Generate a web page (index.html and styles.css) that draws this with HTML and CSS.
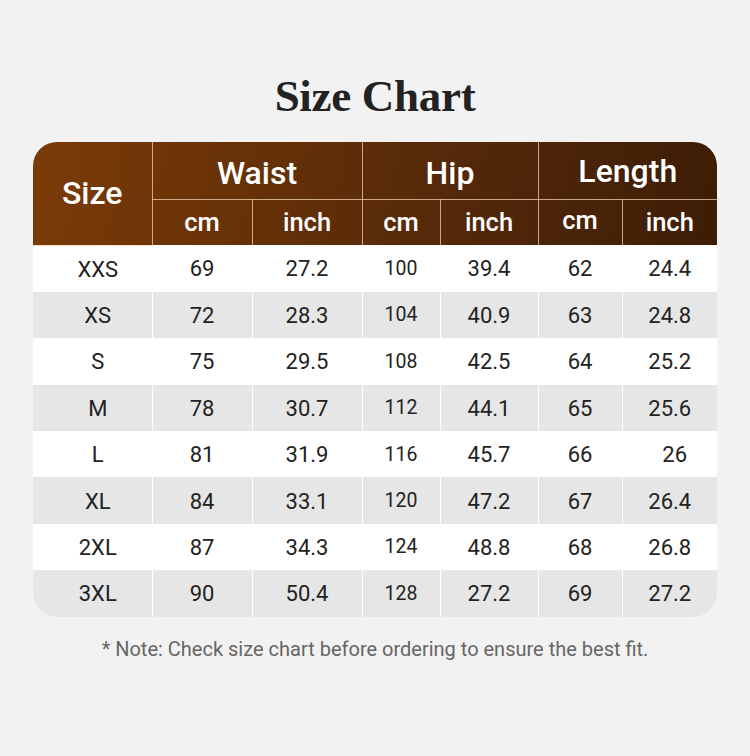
FILE: index.html
```html
<!DOCTYPE html>
<html>
<head>
<meta charset="utf-8">
<link rel="stylesheet" href="styles.css">
</head>
<body>
<div class="page">
  <h1 class="title">Size Chart</h1>
  <div class="card">
    <table class="chart">
      <colgroup>
        <col class="c-size"><col class="c-wcm"><col class="c-win"><col class="c-hcm"><col class="c-hin"><col class="c-lcm"><col class="c-lin">
      </colgroup>
      <thead>
        <tr class="h1row">
          <th rowspan="2" class="size-h">Size</th>
          <th colspan="2">Waist</th>
          <th colspan="2">Hip</th>
          <th colspan="2" class="len-h">Length</th>
        </tr>
        <tr class="h2row">
          <th>cm</th><th>inch</th><th>cm</th><th>inch</th><th class="up">cm</th><th>inch</th>
        </tr>
      </thead>
      <tbody>
        <tr><td>XXS</td><td>69</td><td>27.2</td><td class="sm">100</td><td>39.4</td><td>62</td><td>24.4</td></tr>
        <tr><td>XS</td><td>72</td><td>28.3</td><td class="sm">104</td><td>40.9</td><td>63</td><td>24.8</td></tr>
        <tr><td>S</td><td>75</td><td>29.5</td><td class="sm">108</td><td>42.5</td><td>64</td><td>25.2</td></tr>
        <tr><td>M</td><td>78</td><td>30.7</td><td class="sm">112</td><td>44.1</td><td>65</td><td>25.6</td></tr>
        <tr><td>L</td><td>81</td><td>31.9</td><td class="sm">116</td><td>45.7</td><td>66</td><td class="right">26</td></tr>
        <tr><td>XL</td><td>84</td><td>33.1</td><td class="sm">120</td><td>47.2</td><td>67</td><td>26.4</td></tr>
        <tr><td>2XL</td><td>87</td><td>34.3</td><td class="sm">124</td><td>48.8</td><td>68</td><td>26.8</td></tr>
        <tr><td>3XL</td><td>90</td><td>50.4</td><td class="sm">128</td><td>27.2</td><td>69</td><td>27.2</td></tr>
      </tbody>
    </table>
  </div>
  <p class="note">* Note: Check size chart before ordering to ensure the best fit.</p>
</div>
</body>
</html>
```
FILE: styles.css
```css
html, body {
  margin: 0;
  padding: 0;
  background: #f2f2f2;
}
.page {
  width: 750px;
  height: 756px;
  padding-top: 69px;
  box-sizing: border-box;
}
.title {
  margin: 0;
  text-align: center;
  font-family: "Liberation Serif", "DejaVu Serif", serif;
  font-weight: 700;
  font-size: 45px;
  line-height: 54px;
  color: #222;
  letter-spacing: -0.3px;
}
.card {
  width: 684px;
  margin: 19px auto 0;
  border-radius: 24px;
  overflow: hidden;
  background: #fff;
}
.chart {
  width: 684px;
  border-collapse: collapse;
  table-layout: fixed;
  font-family: Roboto, "Liberation Sans", sans-serif;
}
.c-size { width: 119px; }
.c-wcm { width: 100px; }
.c-win { width: 110px; }
.c-hcm { width: 78px; }
.c-hin { width: 98px; }
.c-lcm { width: 84px; }
.c-lin { width: 95px; }
.chart thead {
  background: linear-gradient(100deg, #7b3b08 0%, #683207 30%, #55290a 60%, #3c1d05 100%);
  color: #fff;
}
.chart th {
  font-weight: 500;
  padding: 0;
  line-height: 1;
  border: 1px solid rgba(240, 210, 180, 0.75);
}
.chart thead tr:first-child th { border-top: none; }
.chart th:first-child { border-left: none; }
.chart th:last-child { border-right: none; }
.chart thead tr:last-child th { border-bottom: none; }
.h1row th {
  height: 52px;
  font-size: 32px;
  padding-top: 5px;
}
.h1row .len-h { padding-top: 0; height: 57px; }
.h1row .size-h {
  padding-top: 0;
  font-size: 32px;
}
.h2row th {
  height: 45px;
  font-size: 25.5px;
}
.h2row th.up { padding-bottom: 4px; height: 41px; }
.chart td {
  height: 44.4px;
  padding: 2px 0 0;
  line-height: 1;
  text-align: center;
  font-size: 22px;
  color: #222;
  border-left: 1px solid #fff;
}
.chart td:first-child { border-left: none; padding-left: 11px; }
.chart td.sm { font-size: 19.5px; padding-top: 0; height: 46.4px; }
.chart td.right { text-align: right; padding-right: 30px; }
.chart tbody tr:nth-child(even) td { background: #e6e6e6; }
.note {
  margin: 20px 0 0;
  text-align: center;
  font-family: Roboto, "Liberation Sans", sans-serif;
  font-size: 20px;
  line-height: 24px;
  color: #666;
}
```
